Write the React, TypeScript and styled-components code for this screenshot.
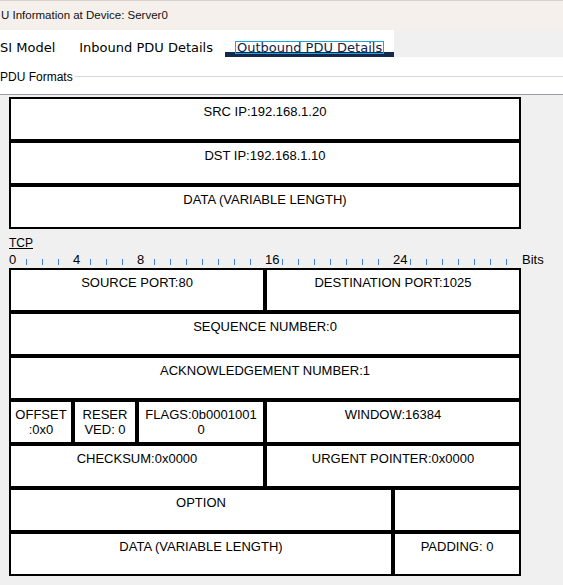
import styled, { createGlobalStyle } from "styled-components";

type Field = { bits: number; text: string[] };

const ipRows: Field[][] = [
  [{ bits: 32, text: ["SRC IP:192.168.1.20"] }],
  [{ bits: 32, text: ["DST IP:192.168.1.10"] }],
  [{ bits: 32, text: ["DATA (VARIABLE LENGTH)"] }],
];

const tcpRows: Field[][] = [
  [
    { bits: 16, text: ["SOURCE PORT:80"] },
    { bits: 16, text: ["DESTINATION PORT:1025"] },
  ],
  [{ bits: 32, text: ["SEQUENCE NUMBER:0"] }],
  [{ bits: 32, text: ["ACKNOWLEDGEMENT NUMBER:1"] }],
  [
    { bits: 4, text: ["OFFSET", ":0x0"] },
    { bits: 4, text: ["RESER", "VED: 0"] },
    { bits: 8, text: ["FLAGS:0b0001001", "0"] },
    { bits: 16, text: ["WINDOW:16384"] },
  ],
  [
    { bits: 16, text: ["CHECKSUM:0x0000"] },
    { bits: 16, text: ["URGENT POINTER:0x0000"] },
  ],
  [
    { bits: 24, text: ["OPTION"] },
    { bits: 8, text: [] },
  ],
  [
    { bits: 24, text: ["DATA (VARIABLE LENGTH)"] },
    { bits: 8, text: ["PADDING: 0"] },
  ],
];

const tabs = ["SI Model", "Inbound PDU Details", "Outbound PDU Details"];
const activeTab = 2;
const bitMarks = [0, 4, 8, 16, 24];

const GlobalStyle = createGlobalStyle`
  html, body {
    margin: 0;
    padding: 0;
  }
  body {
    background: #f0f0f0;
    font-family: "Liberation Sans", Arial, sans-serif;
    color: #000;
  }
`;

function FieldTable({ rows }: { rows: Field[][] }) {
  return (
    <Table>
      {rows.flat().map((field, i) => (
        <Cell key={i} bits={field.bits}>
          {field.text.map((line, j) => (
            <div key={j}>{line}</div>
          ))}
        </Cell>
      ))}
    </Table>
  );
}

function App() {
  return (
    <Window>
      <GlobalStyle />
      <TitleBar>U Information at Device: Server0</TitleBar>
      <TabStrip>
        <Tabs>
          {tabs.map((tab, i) => (
            <Tab key={tab} active={i === activeTab}>
              <TabLabel focused={i === activeTab}>{tab}</TabLabel>
            </Tab>
          ))}
        </Tabs>
      </TabStrip>
      <GroupHeader>
        <GroupTitle>PDU Formats</GroupTitle>
        <GroupLine />
      </GroupHeader>
      <Content>
        <FieldTable rows={ipRows} />
        <ProtocolName>TCP</ProtocolName>
        <Ruler>
          <BitScale>
            {Array.from({ length: 32 }, (_, i) => (
              <Bit key={i}>
                {bitMarks.includes(i) ? <BitLabel>{i}</BitLabel> : <Tick />}
              </Bit>
            ))}
          </BitScale>
          <Unit>Bits</Unit>
        </Ruler>
        <FieldTable rows={tcpRows} />
      </Content>
    </Window>
  );
}

const Window = styled.div`
  width: 563px;
  min-height: 585px;
  background: #f0f0f0;
  overflow: hidden;
`;

const TitleBar = styled.div`
  height: 30px;
  box-sizing: border-box;
  border-top: 1px solid #d6d1cc;
  padding: 8px 0 0 1px;
  background: #f5f0eb;
  font-size: 11.5px;
  line-height: 13px;
  color: #111;
`;

const TabStrip = styled.div`
  display: flex;
  height: 27px;
  background: #f0f0f0;
`;

const Tabs = styled.div`
  display: flex;
  margin-left: -12px;
  background: #fff;
`;

const Tab = styled.div<{ active: boolean }>`
  height: 27px;
  box-sizing: border-box;
  padding: 8px 10px 0;
  border-bottom: 5px solid ${(p) => (p.active ? "#10294d" : "transparent")};
`;

const TabLabel = styled.span<{ focused: boolean }>`
  display: inline-block;
  padding: 0 1px;
  border: 1px solid ${(p) => (p.focused ? "#1aa6e2" : "transparent")};
  font-family: "DejaVu Sans", Verdana, sans-serif;
  font-size: 13px;
  line-height: 11px;
  color: ${(p) => (p.focused ? "#14213f" : "#000")};
  white-space: nowrap;
`;

const GroupHeader = styled.div`
  display: flex;
  align-items: center;
  height: 38px;
  box-sizing: border-box;
  padding-top: 13px;
  padding-bottom: 11px;
  background: #fff;
  border-bottom: 1px solid #9a9ea3;
`;

const GroupTitle = styled.span`
  font-size: 12px;
  line-height: 14px;
  white-space: nowrap;
`;

const GroupLine = styled.div`
  flex: 1;
  height: 1px;
  margin-left: 2px;
  background: #d6d6d6;
`;

const Content = styled.div`
  padding: 2px 0 8px 9px;
`;

const Table = styled.div`
  display: grid;
  grid-template-columns: repeat(32, 16px);
  grid-auto-rows: 44px;
`;

const Cell = styled.div<{ bits: number }>`
  grid-column: span ${(p) => p.bits};
  box-sizing: border-box;
  border: 2px solid #000;
  background: #fff;
  padding: 5px 2px 0;
  text-align: center;
  font-size: 13px;
  line-height: 15px;
  white-space: nowrap;
  overflow: hidden;
`;

const ProtocolName = styled.div`
  margin-top: 7px;
  font-size: 12px;
  line-height: 14px;
  text-decoration: underline;
`;

const Ruler = styled.div`
  display: flex;
  height: 18px;
`;

const BitScale = styled.div`
  display: grid;
  grid-template-columns: repeat(32, 16px);
`;

const Bit = styled.div`
  height: 18px;
`;

const BitLabel = styled.div`
  margin-top: 2px;
  font-size: 13px;
  line-height: 15px;
  white-space: nowrap;
`;

const Tick = styled.div`
  width: 1px;
  height: 6px;
  margin: 9px 0 0 1px;
  background: #3f83d0;
`;

const Unit = styled.div`
  margin: 2px 0 0 1px;
  font-size: 13px;
  line-height: 15px;
`;

export default App;
